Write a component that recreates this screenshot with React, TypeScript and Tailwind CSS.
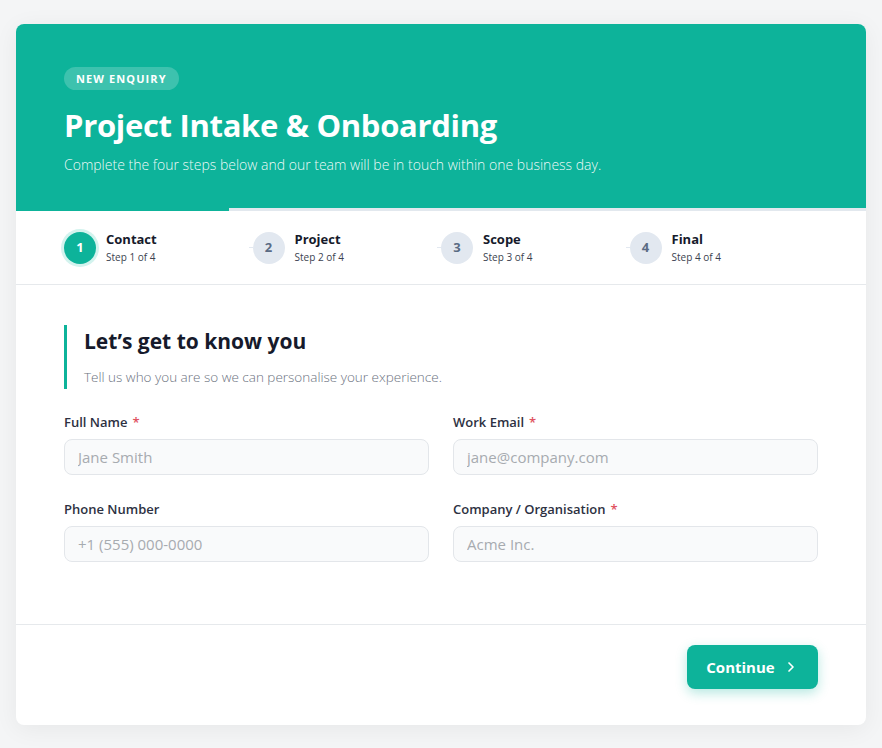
import { ChevronRight } from "lucide-react";

const steps = [
  { n: 1, title: "Contact" },
  { n: 2, title: "Project" },
  { n: 3, title: "Scope" },
  { n: 4, title: "Final" },
];

function Field({ label, placeholder, required }: { label: string; placeholder: string; required?: boolean }) {
  return (
    <div className="flex flex-col">
      <label className="text-[13px] font-semibold text-[#2d3142] mb-[8px] leading-[18px]">
        {label}
        {required && <span className="text-[#e05260] ml-[5px]">*</span>}
      </label>
      <input
        placeholder={placeholder}
        className="h-[36px] rounded-[8px] border border-[#e3e6ea] bg-[#f9fafb] px-[13px] text-[15px] text-[#333] placeholder:text-[#a7abb0] outline-none"
      />
    </div>
  );
}

export default function App() {
  return (
    <div className="min-h-[748px] bg-[#f4f5f6] px-[16px] pt-[24px] pb-[24px] font-['Open_Sans',sans-serif]">
      <div className="bg-white rounded-[8px] shadow-[0_4px_24px_rgba(0,0,0,0.06)] overflow-hidden">
        <div className="bg-[#0db39a] px-[48px] pt-[41px] pb-[33px] text-white">
          <span className="inline-block rounded-full bg-white/20 px-[12px] py-[4px] text-[11px] font-bold tracking-[0.1em] leading-[15px]">
            NEW ENQUIRY
          </span>
          <h1 className="mt-[15px] text-[31px] font-bold leading-[40px] tracking-[-0.01em]">Project Intake &amp; Onboarding</h1>
          <p className="mt-[10px] text-[14px] font-light leading-[20px] text-white/95">
            Complete the four steps below and our team will be in touch within one business day.
          </p>
        </div>
        <div className="h-[3px] bg-[#e2e8ee]">
          <div className="h-full w-1/4 bg-[#0db39a]" />
        </div>
        <div className="grid grid-cols-4 px-[48px] pt-[20px] pb-[20px] border-b border-[#e6e9ec]">
          {steps.map((s) => (
            <div key={s.n} className="flex items-center gap-[10px]">
              {s.n === 1 ? (
                <div className="w-[32px] h-[32px] rounded-full bg-[#0db39a] text-white flex items-center justify-center text-[13px] font-bold ring-[3px] ring-[#d3f3ee]">
                  1
                </div>
              ) : (
                <div className="relative w-[32px] h-[32px] rounded-full bg-[#e2e8f0] text-[#5a6b84] flex items-center justify-center text-[13px] font-bold">
                  <span className="absolute -left-[4px] top-[15px] w-[4px] h-[1px] bg-[#e2e8f0]" />
                  {s.n}
                </div>
              )}
              <div className="flex flex-col">
                <span className="text-[13px] font-bold text-[#161a2b] leading-[17px]">{s.title}</span>
                <span className="text-[10px] text-[#3c4250] leading-[14px] mt-[2px]">Step {s.n} of 4</span>
              </div>
            </div>
          ))}
        </div>
        <div className="px-[48px] pt-[40px] pb-[62px]">
          <div className="border-l-[3px] border-[#0db39a] pl-[17px] pt-[2px] pb-[2px]">
            <h2 className="text-[21px] font-bold text-[#161a2b] leading-[28px]">Let&rsquo;s get to know you</h2>
            <p className="mt-[12px] text-[13.5px] font-light text-[#6b7280] leading-[20px]">
              Tell us who you are so we can personalise your experience.
            </p>
          </div>
          <div className="mt-[24px] grid grid-cols-2 gap-x-[24px] gap-y-[25px]">
            <Field label="Full Name" placeholder="Jane Smith" required />
            <Field label="Work Email" placeholder="jane@company.com" required />
            <Field label="Phone Number" placeholder="+1 (555) 000-0000" />
            <Field label="Company / Organisation" placeholder="Acme Inc." required />
          </div>
        </div>
        <div className="border-t border-[#e6e9ec] px-[48px] pt-[20px] pb-[36px] flex justify-end">
          <button className="h-[44px] w-[131px] rounded-[8px] bg-[#0db39a] text-white text-[15px] font-bold flex items-center justify-center gap-[8px] shadow-[0_4px_12px_rgba(13,179,154,0.3)]">
            Continue
            <ChevronRight size={16} strokeWidth={2.5} />
          </button>
        </div>
      </div>
    </div>
  );
}
